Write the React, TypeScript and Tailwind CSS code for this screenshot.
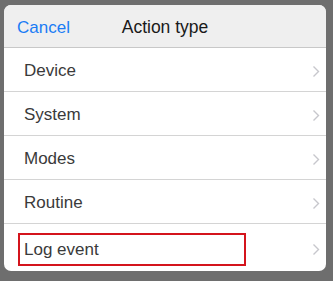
import React from 'react'

const rows = ['Device', 'System', 'Modes', 'Routine']

const Chevron = () => (
  <svg width="8" height="13" viewBox="0 0 8 13" className="shrink-0">
    <path d="M1.5 1.5 L6.5 6.5 L1.5 11.5" fill="none" stroke="#c7c7cc" strokeWidth="1.4" />
  </svg>
)

export default function App() {
  return (
    <div
      className="w-[333px] h-[281px] bg-[#6e6e6e] pt-[5px] pl-[4px] pr-[7px] pb-[10px]"
      style={{ fontFamily: '"Liberation Sans", Arial, sans-serif' }}
    >
      <div className="h-full rounded-[7px] overflow-hidden bg-white flex flex-col">
        {/* header */}
        <div className="h-[43px] shrink-0 bg-[#efefef] border-b border-[#c8c8c8] flex items-center relative pt-[3px]">
          <span className="pl-[13px] text-[17px] text-[#1a7cf5]">Cancel</span>
          <span className="absolute left-0 right-0 text-center text-[17.5px] text-[#1a1a1a] pointer-events-none">
            Action type
          </span>
        </div>

        {rows.map((r) => (
          <div
            key={r}
            className="h-[44px] shrink-0 border-b border-[#d4d4d4] flex items-center pl-[20px] pr-[6px] pt-[3px]"
          >
            <span className="flex-1 text-[17px] text-[#3a3a3a]">{r}</span>
            <Chevron />
          </div>
        ))}

        <div className="flex-1 flex items-center pl-[14px] pr-[6px] pt-[3px]">
          <div className="flex-1">
            <div className="w-[228px] h-[33px] border-2 border-[#d4141c] flex items-center px-[4px] pt-[1px]">
              <span className="text-[17px] text-[#3a3a3a]">Log event</span>
            </div>
          </div>
          <Chevron />
        </div>
      </div>
    </div>
  )
}
